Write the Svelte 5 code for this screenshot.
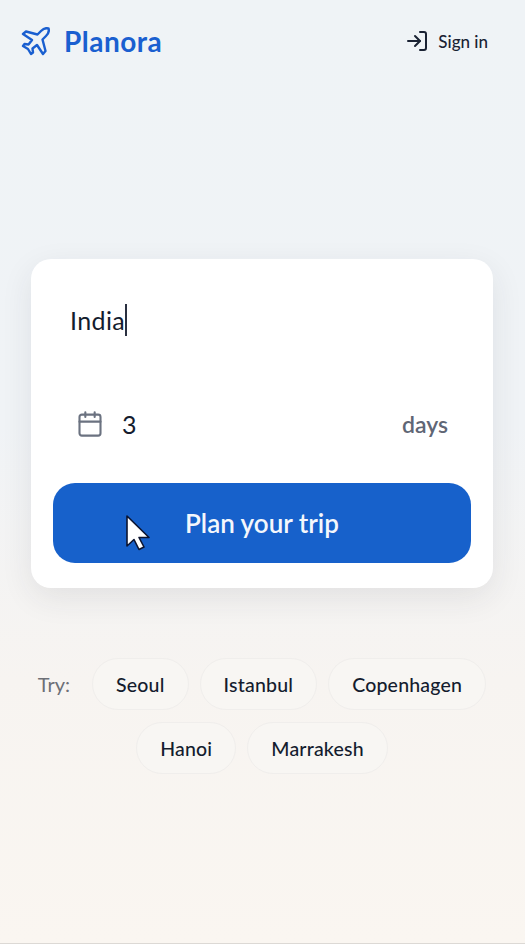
<script>
  let destination = 'India';
  let days = 3;
  const cities = ['Seoul', 'Istanbul', 'Copenhagen', 'Hanoi', 'Marrakesh'];
</script>

<div class="page">
  <header>
    <div class="logo">
      <svg width="29" height="29" viewBox="0 0 29 29" fill="none" stroke="currentColor" stroke-width="2.400" stroke-linejoin="round" stroke-linecap="round">
        <path d="M27.500 1.500C25.500.8 22.500 1.500 20 4L16.500 7.500 5 4.500 2 7 11 13 7.500 17.500 3.500 17 2 19 7 22 10 27 12 25.500 11.500 21.500 16 18 22 27 24.500 24 21.500 12.500 25 9C27.500 6.500 28.200 3.500 27.500 1.500Z" />
      </svg>
      <span>Planora</span>
    </div>
    <button class="signin">
      <svg width="24" height="24" viewBox="0 0 24 24" fill="none" stroke="currentColor" stroke-width="2" stroke-linecap="round" stroke-linejoin="round">
        <path d="M15 3h4a2 2 0 0 1 2 2v14a2 2 0 0 1-2 2h-4" />
        <path d="M10 17l5-5-5-5" />
        <path d="M15 12H3" />
      </svg>
      <span>Sign in</span>
    </button>
  </header>

  <main>
    <div class="card">
      <div class="destination">
        <span class="value">{destination}</span><span class="caret"></span>
      </div>
      <div class="days">
        <svg width="28" height="28" viewBox="0 0 24 24" fill="none" stroke="currentColor" stroke-width="1.800" stroke-linecap="round" stroke-linejoin="round">
          <rect x="3" y="4" width="18" height="18" rx="2" />
          <path d="M16 2v4M8 2v4M3 10h18" />
        </svg>
        <span class="count">{days}</span>
        <span class="unit">days</span>
      </div>
      <button class="plan">Plan your trip</button>
    </div>

    <div class="suggestions">
      <span class="try">Try:</span>
      {#each cities as city}
        <button class="chip">{city}</button>
      {/each}
    </div>
  </main>

  <svg class="cursor" width="28" height="38" viewBox="0 0 28 38">
    <path d="M2 2v30l7-6.500 5 10 5-2.500-5-9.500h10z" fill="#fff" stroke="#0c1430" stroke-width="1.600" stroke-linejoin="round" />
  </svg>
</div>

<style>
  :global(body) {
    margin: 0;
    font-family: Lato, "Open Sans", sans-serif;
  }
  .page {
    position: relative;
    box-sizing: border-box;
    height: 944px;
    overflow: hidden;
    display: flex;
    flex-direction: column;
    background: linear-gradient(180deg, #eff3f6 0%, #f0f3f6 45%, #f7f4f1 72%, #faf6f1 100%);
    border-bottom: 1px solid #dcd9d5;
  }
  header {
    height: 82px;
    display: flex;
    align-items: center;
    justify-content: space-between;
    padding: 0 37px 0 21px;
  }
  .logo {
    display: flex;
    align-items: center;
    gap: 14px;
    color: #1a5fd0;
    font-size: 28px;
    font-weight: 700;
    letter-spacing: 0.5px;
  }
  .signin {
    display: flex;
    align-items: center;
    gap: 9px;
    border: none;
    background: none;
    padding: 0;
    font: inherit;
    font-size: 17px;
    font-weight: 500;
    color: #1a2233;
  }
  main {
    display: flex;
    flex-direction: column;
    padding: 177px 32px 0 31px;
  }
  .card {
    box-sizing: border-box;
    height: 329px;
    background: #fff;
    border-radius: 20px;
    padding: 0 22px;
    box-shadow: 0 10px 32px rgba(40, 40, 60, 0.09);
  }
  .destination {
    height: 122px;
    padding-left: 17px;
    display: flex;
    align-items: center;
    font-size: 25px;
    letter-spacing: 0.4px;
    color: #141c2e;
  }
  .caret {
    width: 2px;
    height: 32px;
    background: #2a3040;
  }
  .days {
    height: 86px;
    margin-bottom: 16px;
    box-sizing: border-box;
    padding: 0 23px;
    display: flex;
    align-items: center;
    gap: 18px;
    color: #6b7280;
  }
  .count {
    flex: 1;
    font-size: 25px;
    color: #141c2e;
  }
  .unit {
    font-size: 23px;
    font-weight: 600;
    color: #5f6675;
  }
  .plan {
    width: 100%;
    height: 80px;
    border: none;
    border-radius: 22px;
    background: #1761cb;
    color: #f4f7fc;
    font: inherit;
    font-size: 26px;
    font-weight: 600;
  }
  .suggestions {
    margin-top: 70px;
    display: flex;
    flex-wrap: wrap;
    justify-content: center;
    align-items: center;
    gap: 12px 11px;
  }
  .try {
    font-size: 20px;
    color: #6d6f76;
    margin-right: 11px;
  }
  .chip {
    height: 52px;
    padding: 0 23px;
    border: 1px solid #f0eeec;
    border-radius: 26px;
    background: #f8f6f3;
    color: #141c2e;
    font: inherit;
    font-size: 19.5px;
    font-weight: 500;
    letter-spacing: 0.2px;
  }
  .cursor {
    position: absolute;
    left: 125px;
    top: 514px;
  }
</style>
